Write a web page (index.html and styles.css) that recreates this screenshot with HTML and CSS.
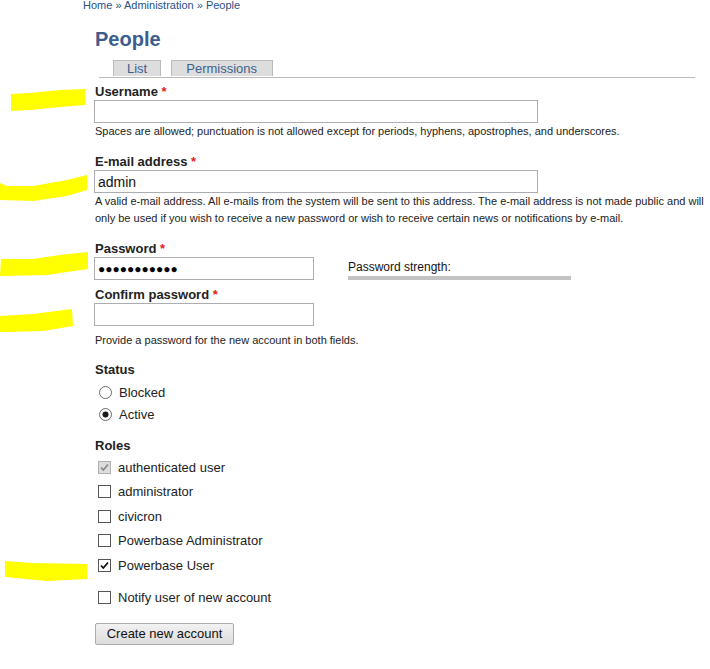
FILE: index.html
```html
<!DOCTYPE html>
<html lang="en">
<head>
  <meta charset="UTF-8">
  <title>People | Administration</title>
  <link rel="stylesheet" href="styles.css">
</head>
<body>
  <!-- Breadcrumb -->
  <div class="breadcrumb">
    <a href="#">Home</a> &raquo; <a href="#">Administration</a> &raquo; <a href="#">People</a>
  </div>

  <div class="page">
    <h1>People</h1>

    <ul class="tabs">
      <li><a href="#">List</a></li>
      <li><a href="#">Permissions</a></li>
    </ul>

    <form class="user-form">
      <div class="form-item item-username">
        <label>Username <span class="required">*</span></label>
        <input type="text" class="text-wide">
        <div class="description">Spaces are allowed; punctuation is not allowed except for periods, hyphens, apostrophes, and underscores.</div>
      </div>

      <div class="form-item">
        <label>E-mail address <span class="required">*</span></label>
        <input type="text" class="text-wide" value="admin">
        <div class="description">A valid e-mail address. All e-mails from the system will be sent to this address. The e-mail address is not made public and will only be used if you wish to receive a new password or wish to receive certain news or notifications by e-mail.</div>
      </div>

      <div class="form-item">
        <label>Password <span class="required">*</span></label>
        <div class="password-row">
          <input type="text" class="text-short masked" value="●●●●●●●●●●●">
          <div class="strength">
            <div class="strength-title">Password strength:</div>
            <div class="strength-bar"></div>
          </div>
        </div>
      </div>

      <div class="form-item item-confirm">
        <label>Confirm password <span class="required">*</span></label>
        <input type="password" class="text-short">
        <div class="description desc-confirm">Provide a password for the new account in both fields.</div>
      </div>

      <div class="form-item item-group">
        <label>Status</label>
        <div class="radios">
          <div class="option radio-option">
            <svg width="13" height="13" viewBox="0 0 13 13"><circle cx="6.5" cy="6.5" r="6" fill="#fff" stroke="#6d6d6d"/></svg>
            <span>Blocked</span>
          </div>
          <div class="option radio-option">
            <svg width="13" height="13" viewBox="0 0 13 13"><circle cx="6.5" cy="6.5" r="6" fill="#fff" stroke="#6d6d6d"/><circle cx="6.5" cy="6.5" r="3" fill="#1a1a1a"/></svg>
            <span>Active</span>
          </div>
        </div>
      </div>

      <div class="form-item item-group">
        <label>Roles</label>
        <div class="checkboxes">
          <div class="option check-option">
            <svg width="13" height="13" viewBox="0 0 13 13"><rect x="0.5" y="0.5" width="12" height="12" fill="#dcdcdc" stroke="#b0b0b0"/><path d="M3 6.5 L5.3 9 L10 3.5" fill="none" stroke="#8a8a8a" stroke-width="1.8"/></svg>
            <span>authenticated user</span>
          </div>
          <div class="option check-option">
            <svg width="13" height="13" viewBox="0 0 13 13"><rect x="0.5" y="0.5" width="12" height="12" fill="#fff" stroke="#555"/></svg>
            <span>administrator</span>
          </div>
          <div class="option check-option">
            <svg width="13" height="13" viewBox="0 0 13 13"><rect x="0.5" y="0.5" width="12" height="12" fill="#fff" stroke="#555"/></svg>
            <span>civicron</span>
          </div>
          <div class="option check-option">
            <svg width="13" height="13" viewBox="0 0 13 13"><rect x="0.5" y="0.5" width="12" height="12" fill="#fff" stroke="#555"/></svg>
            <span>Powerbase Administrator</span>
          </div>
          <div class="option check-option">
            <svg width="13" height="13" viewBox="0 0 13 13"><rect x="0.5" y="0.5" width="12" height="12" fill="#fff" stroke="#555"/><path d="M3 6.5 L5.3 9 L10 3.5" fill="none" stroke="#111" stroke-width="1.8"/></svg>
            <span>Powerbase User</span>
          </div>
        </div>
      </div>

      <div class="form-item item-notify">
        <div class="option check-option">
          <svg width="13" height="13" viewBox="0 0 13 13"><rect x="0.5" y="0.5" width="12" height="12" fill="#fff" stroke="#555"/></svg>
          <span>Notify user of new account</span>
        </div>
      </div>

      <button type="button" class="submit">Create new account</button>
    </form>
  </div>

  <!-- Highlighter marks drawn over the screenshot -->
  <svg class="marks" width="710" height="669" viewBox="0 0 710 669">
    <polygon points="11,94 30,93 60,90 85,89 85,105 60,107 30,110 11,111"/>
    <polygon points="0,183 7,186 33,186 67,180 87,175 87,190 67,196 33,201 0,200"/>
    <polygon points="1,259 33,259 60,255 88,252 88,269 67,272 47,275 0,276"/>
    <polygon points="0,316 33,314 72,309 73,326 43,331 7,332 0,332"/>
    <polygon points="5,561 33,563 87,564 87,579 47,581 5,577"/>
  </svg>
</body>
</html>
```

FILE: styles.css
```css
/* Base */
body {
  margin: 0;
  font-family: "Liberation Sans", Arial, sans-serif;
  color: #222222;
  background: #ffffff;
  position: relative;
}
a {
  text-decoration: none;
}

/* Breadcrumb */
.breadcrumb {
  font-size: 11px;
  line-height: 11px;
  padding-left: 83px;
  color: #27508a;
}
.breadcrumb a {
  color: #27508a;
}

/* Page */
.page {
  margin-left: 95px;
  width: 612px;
}
h1 {
  margin: 16px 0 0;
  font-size: 20px;
  line-height: 24px;
  color: #3b5d8f;
}

/* Tabs */
.tabs {
  list-style: none;
  margin: 9px 12px 0 4px;
  padding: 0 0 0 14px;
  height: 17px;
  display: flex;
  align-items: flex-start;
  gap: 10px;
  border-bottom: 1px solid #bbbbbb;
}
.tabs li {
  height: 16px;
  box-sizing: border-box;
  border: 1px solid #bbbbbb;
  border-bottom: none;
  background: #dddddd;
  padding: 0 13px;
  font-size: 13px;
  line-height: 15px;
}
.tabs li + li {
  padding: 0 15px 0 14px;
}
.tabs a {
  color: #3d5f8e;
}

/* Form items */
.form-item {
  margin-top: 14px;
}
.item-username {
  margin-top: 6px;
}
.form-item label {
  display: block;
  font-size: 13px;
  font-weight: bold;
  line-height: 16px;
}
.required {
  color: #e0201c;
}
.form-item input {
  display: block;
  box-sizing: border-box;
  height: 23px;
  margin: 0 0 0 -1px;
  border: 1px solid #abadb3;
  padding: 0 3px;
  font-family: "Liberation Sans", Arial, sans-serif;
  font-size: 14px;
  color: #111111;
  background: #ffffff;
}
.form-item input.masked {
  font-size: 12px;
  color: #000000;
}
.text-wide {
  width: 444px;
}
.text-short {
  width: 220px;
}
.description {
  font-size: 11px;
  line-height: 17px;
}
.desc-confirm {
  margin-top: 6px;
}
.item-confirm {
  margin-top: 7px;
}

/* Password strength */
.password-row {
  display: flex;
  align-items: flex-start;
  gap: 34px;
}
.strength {
  padding-top: 3px;
  width: 223px;
}
.strength-title {
  font-size: 12px;
  line-height: 14px;
  color: #111111;
}
.strength-bar {
  margin-top: 2px;
  height: 4px;
  background: #c3c3c3;
}

/* Radios and checkboxes */
.item-group {
  margin-top: 13px;
}
.radios {
  margin-top: 3px;
}
.checkboxes {
  margin-top: 1px;
}
.option {
  display: flex;
  align-items: center;
  font-size: 13px;
  color: #222222;
}
.option svg {
  flex: none;
}
.radio-option {
  height: 22px;
  padding-left: 4px;
  gap: 7px;
}
.check-option {
  height: 24.5px;
  padding-left: 3px;
  gap: 7px;
}
.item-notify {
  margin-top: 7.5px;
}

/* Submit */
.submit {
  display: block;
  margin-top: 13px;
  width: 139px;
  height: 22px;
  padding: 0;
  border: 1px solid #acacac;
  border-radius: 2px;
  background: linear-gradient(#f2f2f2, #dcdcdc);
  font-family: "Liberation Sans", Arial, sans-serif;
  font-size: 13px;
  color: #111111;
}

/* Highlighter overlay */
.marks {
  position: absolute;
  top: 0;
  left: 0;
  pointer-events: none;
}
.marks polygon {
  fill: #ffff00;
}
```
